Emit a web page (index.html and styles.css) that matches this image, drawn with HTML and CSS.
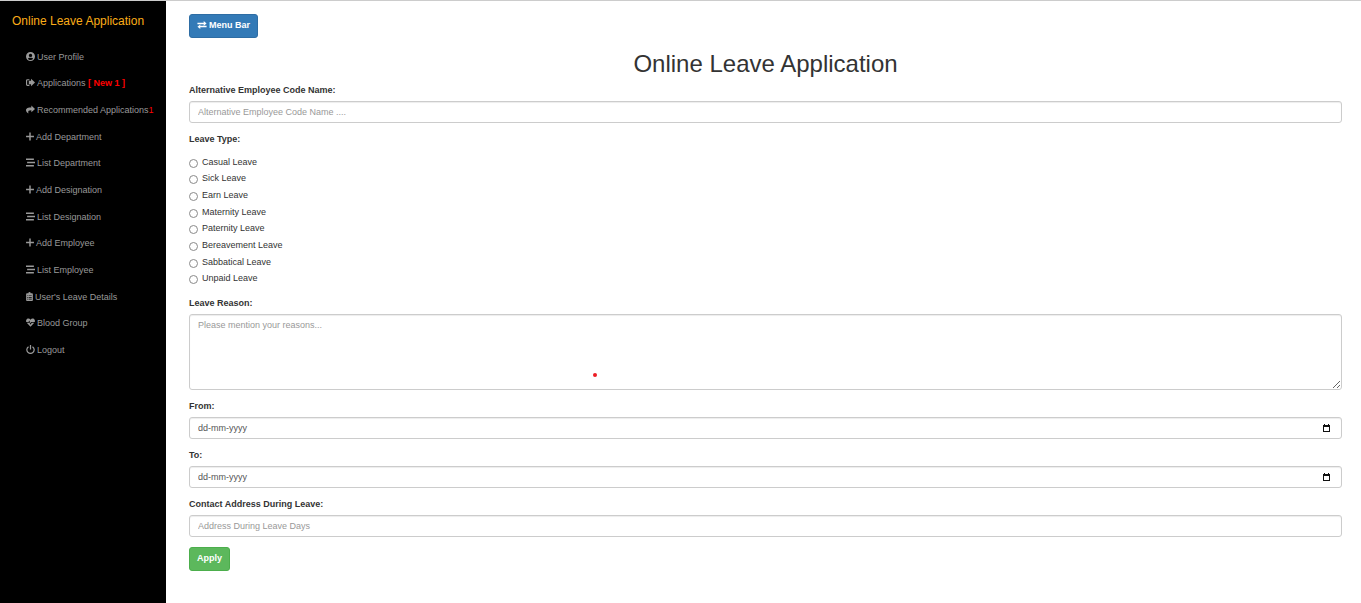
FILE: index.html
```html
<!DOCTYPE html>
<html lang="en">
<head>
<meta charset="utf-8">
<title>Online Leave Application</title>
<link rel="stylesheet" href="styles.css">
</head>
<body>
<div class="layout">
  <nav class="sidebar">
    <a class="brand" href="#">Online Leave Application</a>
    <ul class="menu">
      <li><a href="#"><svg class="icon" viewBox="0 0 16 16"><path fill-rule="evenodd" d="M8 0a8 8 0 1 0 0 16A8 8 0 0 0 8 0zm0 3a3 3 0 1 1 0 6 3 3 0 0 1 0-6zm0 11c-2 0-3.600-.9-4.600-2.200C4 10.600 5.200 10 6.300 10c1 .4 2.400.4 3.400 0 1.100 0 2.300.6 2.900 1.800A6 6 0 0 1 8 14z"/></svg>User Profile</a></li>
      <li><a href="#"><svg class="icon" viewBox="0 0 16 16"><path d="M6 2v2H3C2.400 4 2 4.400 2 5v6c0 .6.4 1 1 1h3v2H2.500A2.500 2.500 0 0 1 0 11.500v-7A2.500 2.500 0 0 1 2.500 2zM9 1.500l7 6.500-7 6.500V11H5V5h4z"/></svg>Applications <span class="alert alert-strong">[ New 1 ]</span></a></li>
      <li><a href="#"><svg class="icon" viewBox="0 0 16 16"><path d="M9.500 1l6.500 6-6.500 6V9.500C5 9.500 3 10.500 4.300 15 1.500 13.500 0 11.500 0 9.500c0-4 4-5 9.500-5z"/></svg>Recommended Applications<span class="alert">1</span></a></li>
      <li><a href="#"><svg class="icon icon-plus" viewBox="0 0 14 16"><path d="M5.700 1h2.600v5.700H14v2.600H8.300V15H5.700V9.300H0V6.700h5.700z"/></svg>Add Department</a></li>
      <li><a href="#"><svg class="icon" viewBox="0 0 16 16"><path d="M0 1h14v2.600H0zM2 6.700h14v2.600H2zM0 12.400h14V15H0z"/></svg>List Department</a></li>
      <li><a href="#"><svg class="icon icon-plus" viewBox="0 0 14 16"><path d="M5.700 1h2.600v5.700H14v2.600H8.300V15H5.700V9.300H0V6.700h5.700z"/></svg>Add Designation</a></li>
      <li><a href="#"><svg class="icon" viewBox="0 0 16 16"><path d="M0 1h14v2.600H0zM2 6.700h14v2.600H2zM0 12.400h14V15H0z"/></svg>List Designation</a></li>
      <li><a href="#"><svg class="icon icon-plus" viewBox="0 0 14 16"><path d="M5.700 1h2.600v5.700H14v2.600H8.300V15H5.700V9.300H0V6.700h5.700z"/></svg>Add Employee</a></li>
      <li><a href="#"><svg class="icon" viewBox="0 0 16 16"><path d="M0 1h14v2.600H0zM2 6.700h14v2.600H2zM0 12.400h14V15H0z"/></svg>List Employee</a></li>
      <li><a href="#"><svg class="icon icon-board" viewBox="0 0 12 16"><path fill-rule="evenodd" d="M1.500 2H4a2 2 0 0 1 4 0h2.500c.8 0 1.500.7 1.500 1.500v11c0 .8-.7 1.500-1.500 1.500h-9C.7 16 0 15.300 0 14.500v-11C0 2.700.7 2 1.500 2zM2 6v1.300h1.500V6zm2.500 0v1.300H10V6zM2 9v1.300h1.500V9zm2.500 0v1.300H10V9zM2 12v1.300h1.500V12zm2.500 0v1.300H10V12z"/></svg>User's Leave Details</a></li>
      <li><a href="#"><svg class="icon" viewBox="0 0 16 16"><path d="M8 3C6 0 2 .5.700 3-.2 4.600 0 6 .5 7.300h4l1.300-2.800L8 9.500l1.200-2.200h6.300c.5-1.300.7-2.700-.2-4.300C14 .5 10 0 8 3zM1.300 8.500L8 15.500l6.700-7h-4.500L8 12 5.800 7.500l-.5 1z"/></svg>Blood Group</a></li>
      <li><a href="#"><svg class="icon" viewBox="0 0 16 16"><path d="M4.500 3A6.500 6.500 0 1 0 11.500 3M8 0v8" fill="none" stroke="currentColor" stroke-width="2.200"/></svg>Logout</a></li>
    </ul>
  </nav>

  <main class="content">
    <button class="btn btn-primary" type="button"><svg class="icon icon-swap" viewBox="0 0 16 14"><path d="M0 3h11V0l5 4.200-5 4V5.500H0zM16 8.500H5V6L0 10l5 4v-3h11z"/></svg>Menu Bar</button>
    <h1 class="title">Online Leave Application</h1>
    <form class="form">
      <div class="field">
        <label class="label" for="code">Alternative Employee Code Name:</label>
        <input class="control" id="code" type="text" placeholder="Alternative Employee Code Name ....">
      </div>
      <fieldset class="choices">
        <legend class="label">Leave Type:</legend>
        <div class="options">
          <label class="option"><input type="radio" name="type"><span>Casual Leave</span></label>
          <label class="option"><input type="radio" name="type"><span>Sick Leave</span></label>
          <label class="option"><input type="radio" name="type"><span>Earn Leave</span></label>
          <label class="option"><input type="radio" name="type"><span>Maternity Leave</span></label>
          <label class="option"><input type="radio" name="type"><span>Paternity Leave</span></label>
          <label class="option"><input type="radio" name="type"><span>Bereavement Leave</span></label>
          <label class="option"><input type="radio" name="type"><span>Sabbatical Leave</span></label>
          <label class="option"><input type="radio" name="type"><span>Unpaid Leave</span></label>
        </div>
      </fieldset>
      <div class="field reason">
        <label class="label" for="reason">Leave Reason:</label>
        <textarea class="control control-area" id="reason" placeholder="Please mention your reasons..."></textarea>
        <span class="marker"></span>
      </div>
      <div class="field">
        <label class="label" for="from">From:</label>
        <div class="control date">
          <input class="date-input" id="from" type="text" placeholder="dd-mm-yyyy">
          <button class="date-button" type="button" aria-label="Choose from date"><svg class="calendar" viewBox="0 0 7 8"><path fill-rule="evenodd" d="M1 0h1v1h3V0h1v1h1v7H0V1h1zM1 3v4h5V3z"/></svg></button>
        </div>
      </div>
      <div class="field">
        <label class="label" for="to">To:</label>
        <div class="control date">
          <input class="date-input" id="to" type="text" placeholder="dd-mm-yyyy">
          <button class="date-button" type="button" aria-label="Choose to date"><svg class="calendar" viewBox="0 0 7 8"><path fill-rule="evenodd" d="M1 0h1v1h3V0h1v1h1v7H0V1h1zM1 3v4h5V3z"/></svg></button>
        </div>
      </div>
      <div class="field">
        <label class="label" for="address">Contact Address During Leave:</label>
        <input class="control" id="address" type="text" placeholder="Address During Leave Days">
      </div>
      <button class="btn btn-success" type="submit">Apply</button>
    </form>
  </main>
</div>
</body>
</html>
```
FILE: styles.css
```css
* {
  box-sizing: border-box;
}

body {
  margin: 0;
  font: 9px/13px "Liberation Sans", Arial, sans-serif;
  color: #333;
  background: #fff;
}

.layout {
  display: flex;
  min-height: 100vh;
  border-top: 1px solid #ccc;
}

.sidebar {
  flex: 0 0 166px;
  background: #000;
  white-space: nowrap;
}

.brand {
  display: block;
  padding: 0 12px;
  font-size: 12px;
  line-height: 40px;
  color: #fbad18;
  text-decoration: none;
}

.menu {
  display: grid;
  grid-auto-rows: 1fr;
  height: 320px;
  margin: 3px 0 0;
  padding: 0 0 0 26px;
  list-style: none;
}

.menu li {
  display: flex;
  align-items: center;
}

.menu a {
  color: #999;
  text-decoration: none;
}

.icon {
  display: inline-block;
  width: 9px;
  height: 9px;
  margin-right: 2px;
  vertical-align: -1px;
  fill: currentColor;
}

.icon-plus {
  width: 8px;
}

.icon-board {
  width: 7px;
}

.icon-swap {
  width: 10px;
  height: 8px;
}

.alert {
  color: #f00;
}

.alert-strong {
  font-weight: bold;
}

.content {
  flex: 1;
  min-width: 0;
  padding: 13px 19px 32px 23px;
}

.btn {
  display: block;
  height: 24px;
  padding: 0 7px 2px;
  border: 1px solid;
  border-radius: 3px;
  font: bold 9px/13px "Liberation Sans", Arial, sans-serif;
  color: #fff;
  white-space: nowrap;
}

.btn-primary {
  background: #337ab7;
  border-color: #2e6da4;
}

.btn-success {
  background: #5cb85c;
  border-color: #4cae4c;
}

.title {
  margin: 13px 0 7px;
  font-size: 24px;
  line-height: 26px;
  font-weight: normal;
  text-align: center;
}

.field,
.choices {
  margin: 0 0 10px;
}

.choices {
  padding: 0;
  border: 0;
}

.label {
  display: block;
  margin-bottom: 4px;
  padding: 0;
  font-weight: bold;
}

.control {
  display: block;
  width: 100%;
  height: 22px;
  padding: 0 8px;
  border: 1px solid #ccc;
  border-radius: 3px;
  background: #fff;
  box-shadow: inset 0 1px 1px rgba(0, 0, 0, 0.075);
  font: inherit;
  color: #555;
}

.control::placeholder {
  color: #999;
}

.control-area {
  height: 76px;
  padding: 4px 8px;
  resize: vertical;
}

.options {
  display: grid;
  grid-auto-rows: 1fr;
  height: 133px;
  margin-top: 4px;
}

.option {
  display: flex;
  align-items: center;
  gap: 4px;
}

.option input {
  appearance: none;
  width: 9px;
  height: 9px;
  margin: 2px 0 0;
  border: 1px solid #8a8a8a;
  border-radius: 50%;
}

.option input:checked {
  background: #337ab7;
}

.reason {
  position: relative;
}

.marker {
  position: absolute;
  left: 35%;
  top: 76px;
  width: 4px;
  height: 4px;
  border-radius: 50%;
  background: #ed1c24;
}

.date {
  display: flex;
  align-items: center;
  padding-right: 11px;
}

.date-input {
  flex: 1;
  min-width: 0;
  padding: 0;
  border: 0;
  background: transparent;
  font: inherit;
  color: #555;
}

.date-input::placeholder {
  color: #555;
}

.date-button {
  display: flex;
  padding: 0;
  border: 0;
  background: transparent;
  color: #111;
}

.calendar {
  width: 7px;
  height: 8px;
  fill: currentColor;
}
```
